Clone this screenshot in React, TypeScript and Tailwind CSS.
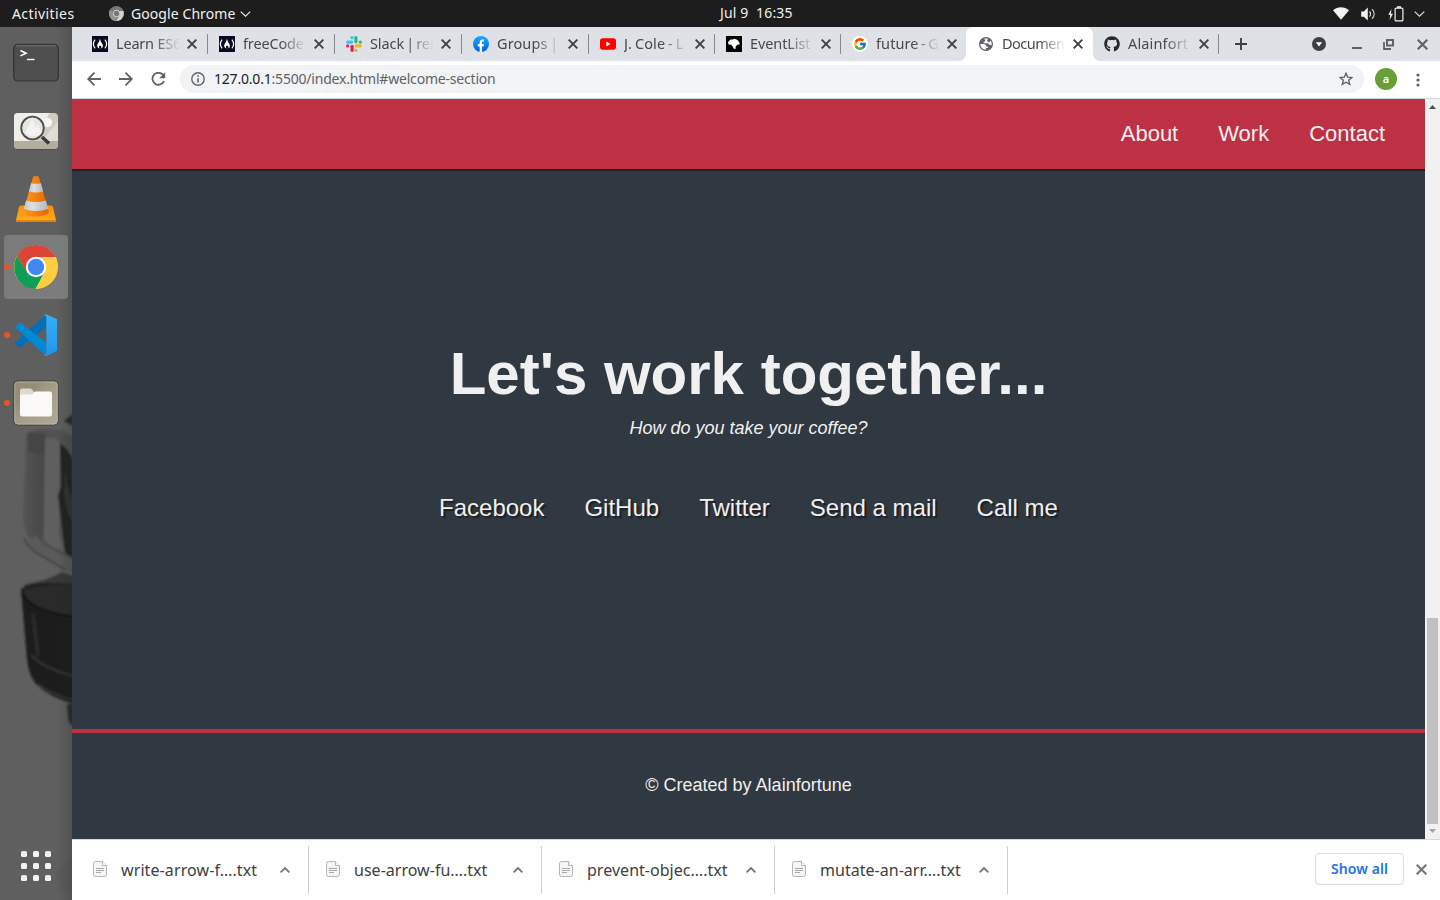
import React from "react";
import { FcGoogle } from "react-icons/fc";
import { FaGithub } from "react-icons/fa";

const uiFont = "font-['Noto_Sans','Open_Sans',sans-serif]";

function FccIcon() {
  return (
    <svg width="16" height="16" viewBox="0 0 16 16">
      <rect width="16" height="16" fill="#0a0a23" />
      <path d="M3.100 3.600C.9 6.400.9 9.600 3.100 12.400M12.900 3.600c2.200 2.800 2.200 6 0 8.800" fill="none" stroke="#fff" strokeWidth="1.200" />
      <path d="M7.500 3c1.300 1 1 2.200 1.700 3.300 1.400 1.700 2 3.200 1.500 4.700-.3.900-.9 1.400-1.600 1.600.6-1.200.3-2.100-.4-3.100-.3.700-.9.600-1.100.100-.9.900-.9 2 .2 3C5.100 12 4.600 9.700 5.900 7.600 6.800 6.100 7.800 4.900 7.500 3z" fill="#fff" />
    </svg>
  );
}

function SlackIcon() {
  return (
    <svg width="16" height="16" viewBox="0 0 16 16" strokeWidth="3.2" strokeLinecap="round">
      <path d="M1.700 6.100h4" stroke="#36c5f0" />
      <path d="M9.900 1.700v4" stroke="#2eb67d" />
      <path d="M10.300 9.900h4" stroke="#ecb22e" />
      <path d="M6.100 10.300v4" stroke="#e01e5a" />
      <path d="M6 1.700h.1" stroke="#36c5f0" />
      <path d="M14.300 6v.1" stroke="#2eb67d" />
      <path d="M9.900 14.300h.1" stroke="#ecb22e" />
      <path d="M1.700 9.900v.1" stroke="#e01e5a" />
    </svg>
  );
}

function FacebookIcon() {
  return (
    <svg width="16" height="16" viewBox="0 0 16 16">
      <defs>
        <linearGradient id="fb" x1="0" y1="0" x2="0" y2="1">
          <stop offset="0" stopColor="#19aaff" />
          <stop offset="1" stopColor="#0062e0" />
        </linearGradient>
      </defs>
      <circle cx="8" cy="8" r="8" fill="url(#fb)" />
      <path d="M6.700 16v-5.600H4.800V8h1.900V6.400c0-2 1.200-3 2.900-3 .7 0 1.400.1 1.400.1v1.900h-.9c-.9 0-1.200.5-1.200 1.200V8h2.100l-.4 2.400H8.900V16z" fill="#fff" />
    </svg>
  );
}

function YoutubeIcon() {
  return (
    <svg width="16" height="16" viewBox="0 0 16 16">
      <rect y="2.200" width="16" height="11.500" rx="2.800" fill="#f00" />
      <path d="M6.300 5.500v5l4.300-2.500z" fill="#fff" />
    </svg>
  );
}

function MdnIcon() {
  return (
    <svg width="16" height="16" viewBox="0 0 16 16">
      <rect width="16" height="16" fill="#000" />
      <path d="M2 6.300l1.200-1.600 1.300-1.300 2.300.1 1.300-.7 2 .4 1.900 1.400 1.300 1.800.7 1.900-2.500.4-1.700 1.600-.4 2.900-1.600-.8-1.500-2.300-1.200-1.300-2.500-.3z" fill="#fff" />
    </svg>
  );
}

function GoogleIcon() {
  return (
    <span className="flex size-4 items-center justify-center rounded-full bg-white">
      <FcGoogle size={14} />
    </span>
  );
}

function GlobeIcon() {
  return (
    <svg width="16" height="16" viewBox="0 0 16 16">
      <circle cx="8" cy="8" r="7" fill="#5f6368" />
      <path d="M2.300 8h3.200c1.900 0 2.800.9 2.800 2.600h1.500v1.500H7.900v1.500C4.800 13.500 2.300 11.200 2.300 8z" fill="#fff" />
      <path d="M5.700 2.900C7 2.300 8.600 2.200 9.900 2.700c-.1.900-.6 1.500-1.500 1.600H7v1.500H5.600v1.400h3.600c1.300 0 1.600.7 1.600 1.500h1.500c.5 0 1 .4 1.200.9 .5-2 .1-3.800-1-5.100-.2 1.200-.9 1.800-2.200 1.700C9.600 6.100 9.500 5.500 9.500 4.500L8 4z" fill="#fff" />
    </svg>
  );
}

function GithubIcon() {
  return <FaGithub size={16} color="#24292e" />;
}

function Cross({ size = 9, color = "#3c4043", stroke = 1.8 }: { size?: number; color?: string; stroke?: number }) {
  return (
    <svg width={size} height={size} viewBox="0 0 9 9" stroke={color} strokeWidth={stroke}>
      <path d="M.6.6l7.800 7.800M8.400.6L.6 8.400" />
    </svg>
  );
}

type TabInfo = { title: string; icon: () => React.JSX.Element; width: string; track: string; active?: boolean; sep?: boolean };

const tabs: TabInfo[] = [
  { title: "Learn ES6", icon: FccIcon, width: "w-[127px]", track: "tracking-[-0.2px]", sep: true },
  { title: "freeCode", icon: FccIcon, width: "w-[127px]", track: "tracking-[-0.15px]", sep: true },
  { title: "Slack | rem", icon: SlackIcon, width: "w-[127px]", track: "tracking-[-0.1px] [word-spacing:-1.5px]", sep: true },
  { title: "Groups | F", icon: FacebookIcon, width: "w-[127px]", track: "tracking-[0.1px] [word-spacing:-1px]", sep: true },
  { title: "J. Cole - L", icon: YoutubeIcon, width: "w-[126px]", track: "tracking-[0.1px] [word-spacing:-1px]", sep: true },
  { title: "EventList", icon: MdnIcon, width: "w-[126px]", track: "tracking-[-0.1px]", sep: true },
  { title: "future - G", icon: GoogleIcon, width: "w-[126px]", track: "tracking-[0.1px] [word-spacing:-1.5px]" },
  { title: "Documen", icon: GlobeIcon, width: "w-[126px]", track: "tracking-[-0.5px]", active: true },
  { title: "Alainfort", icon: GithubIcon, width: "w-[126px]", track: "tracking-[0.15px]", sep: true },
];

function Tab({ tab }: { tab: TabInfo }) {
  const Icon = tab.icon;
  return (
    <div className={`relative flex h-[34px] shrink-0 items-center pl-[11px] ${tab.width}`}>
      {tab.active && (
        <svg className="absolute -left-[9px] top-0" width="143" height="34" viewBox="0 0 143 34">
          <path d="M0 34c5 0 8-3 8-8V8c0-5 3-8 8-8h111c5 0 8 3 8 8v18c0 5 3 8 8 8z" fill="#fff" />
        </svg>
      )}
      <span className="relative flex size-4 shrink-0">
        <Icon />
      </span>
      <span
        className={`relative -mt-0.5 ml-2 w-[64px] shrink-0 overflow-hidden whitespace-nowrap text-[14.5px] leading-5 text-[#45494d] [mask-image:linear-gradient(to_right,#000_58%,transparent_100%)] ${tab.track}`}
      >
        {tab.title}
      </span>
      <span className="relative ml-[7px] flex">
        <Cross size={10} stroke={1.7} />
      </span>
      {tab.sep && <span className="ml-auto h-5 w-px bg-[#85898d]" />}
    </div>
  );
}

function TopBar() {
  return (
    <header className="flex h-[27px] shrink-0 items-center bg-[#1d1d1d] text-[14px] leading-5 text-[#f0f0f0]">
      <div className="flex w-[720px] items-center pl-3">
        <span className="w-[98px] tracking-[0.42px]">Activities</span>
        <svg width="15" height="15" viewBox="0 0 15 15" className="-ml-px">
          <circle cx="7.500" cy="7.500" r="7.500" fill="#777" />
          <path d="M14.400 5H7.500l3 4.200L7 15c5 .3 9-4.500 7.400-10z" fill="#d2d2d2" />
          <path d="M1.200 3.300l3.300 5.500L7.500 11 7 15C1.500 15-1.800 8.500 1.200 3.300z" fill="#929292" />
          <circle cx="7.500" cy="7.500" r="3.300" fill="#777" stroke="#ddd" strokeWidth=".9" />
        </svg>
        <span className="ml-[7px] w-[109px] tracking-[0.08px]">Google Chrome</span>
        <svg width="11" height="6" viewBox="0 0 11 6" fill="none" stroke="#e8e8e8" strokeWidth="1.200">
          <path d="M.7.600l4.800 4.600L10.300.600" />
        </svg>
      </div>
      <span className="-mt-px whitespace-pre tracking-[0.15px]">Jul 9  16:35</span>
      <div className="ml-auto flex items-center pr-[15px]">
        <svg width="16" height="13" viewBox="0 0 16 13">
          <path d="M0 3.200C4.500-.8 11.500-.8 16 3.200L8 12.800z" fill="#f2f2f2" />
        </svg>
        <svg width="15" height="14" viewBox="0 0 15 14" className="ml-3" fill="none">
          <path d="M.2 4.400h2.600L6.800.600v12.800L2.800 9.800H.2z" fill="#f2f2f2" />
          <path d="M8.500 4.500c1.200 1.300 1.200 3.700 0 5" stroke="#f2f2f2" strokeWidth="1.200" />
          <path d="M11 2.300c2.900 2.700 2.900 6.700 0 9.400" stroke="#c8c8c8" strokeWidth="1.200" />
        </svg>
        <svg width="16" height="16" viewBox="0 0 16 16" className="ml-[12px]" fill="none">
          <path d="M3.500 3L.3 8.800h2L1.600 14l3.400-6.200H2.900z" fill="#f2f2f2" />
          <rect x="7.100" y="2.100" width="7.800" height="12.800" rx="1" stroke="#f2f2f2" strokeWidth="1.200" />
          <path d="M9 1h4" stroke="#f2f2f2" strokeWidth="1.600" />
        </svg>
        <svg width="11" height="6" viewBox="0 0 11 6" fill="none" stroke="#ddd" strokeWidth="1.200" className="ml-[10px]">
          <path d="M.7.600l4.800 4.600L10.300.600" />
        </svg>
      </div>
    </header>
  );
}

function Wallpaper() {
  return (
    <svg className="absolute left-0 top-0" width="72" height="873" viewBox="0 27 72 873">
      <defs>
        <filter id="soft" x="-20%" y="-10%" width="140%" height="120%">
          <feGaussianBlur stdDeviation="1.300" />
        </filter>
        <linearGradient id="frame" x1="0" y1="0" x2="1" y2="0">
          <stop offset="0" stopColor="#535353" />
          <stop offset="1" stopColor="#474747" />
        </linearGradient>
        <linearGradient id="edge" x1="0" y1="0" x2="1" y2="0">
          <stop offset="0" stopColor="#222" stopOpacity="0" />
          <stop offset="1" stopColor="#222" stopOpacity=".22" />
        </linearGradient>
      </defs>
      <rect y="27" width="72" height="873" fill="#5f5f5f" />
      <g filter="url(#soft)">
        <path d="M64 421l9-7v12z" fill="#2a2a2a" />
        <path d="M30 431q25-6 43 5v120l-30-14q-20-10-20-22l3-80q0-7 4-9z" fill="#515151" />
        <path d="M26 434h19l-2 106-5 6q-12-6-14-22z" fill="url(#frame)" />
        <path d="M28 433h17v20q-9 4-17-3z" fill="#454545" />
        <path d="M45 439q10-4 15 4l-1 92 8 22-23-17z" fill="#5f5f5f" />
        <path d="M60 443q8 6 13 16v100l-8-6-7-58 3-8z" fill="#202020" />
        <path d="M65 465q2 25 8 35v24q-8-15-9-30z" fill="#333" />
        <path d="M26 540q2 8 16 15l30 18v-16l-29-17-5-5z" fill="#5a5a5a" />
        <path d="M24 538q3 10 18 18l24 14" fill="none" stroke="#404040" strokeWidth="1.500" />
        <path d="M38 536q5 8 14 12l20 10" fill="none" stroke="#474747" strokeWidth="1.500" />
        <path d="M24 585q25-5 38-13l11 4v20H24z" fill="#393939" />
        <path d="M21 589q8-6 28-6l25 1v120q-25-7-38-20-7-8-9-25z" fill="#1b1b1b" />
        <path d="M23 590q15-6 50-5v30q-24-2-38-10-11-6-12-15z" fill="#2c2c2c" />
        <path d="M23 593q5 17 50 24" fill="none" stroke="#121212" strokeWidth="2.500" />
        <path d="M31 655q12 13 42 21M38 684q12 10 35 16" fill="none" stroke="#343434" strokeWidth="2" />
        <path d="M33 614l5 42" stroke="#292929" strokeWidth="4" />
        <path d="M67 704h7v22q-5-2-6-7z" fill="#2a2a2a" />
        <path d="M74 858l-18 12 4 20h14z" fill="#565656" opacity=".5" />
      </g>
      <rect x="58" y="27" width="14" height="873" fill="url(#edge)" />
    </svg>
  );
}

function TerminalIcon() {
  return (
    <svg width="48" height="48" viewBox="0 0 48 48">
      <rect x="1.700" y="5.400" width="44.600" height="36.600" rx="4" fill="#4e4e4e" stroke="#343434" strokeWidth="1.200" />
      <path d="M4 6.800h40" stroke="#737373" />
      <path d="M8.500 11.500l5.500 2.700-5.500 2.700" fill="none" stroke="#fff" strokeWidth="1.600" />
      <path d="M15 20.500h7.500" stroke="#fff" strokeWidth="1.400" />
    </svg>
  );
}

function ViewerIcon() {
  return (
    <svg width="48" height="48" viewBox="0 0 48 48">
      <rect x="2" y="6.800" width="44" height="36" rx="4" fill="#4a4a48" />
      <rect x="2" y="6" width="44" height="36" rx="4" fill="#cfcdc2" />
      <path d="M6 6h32L17 34H2V10q0-4 4-4z" fill="#efefe8" />
      <path d="M46 14v20H30z" fill="#dedcd3" />
      <path d="M2 34h44v4q0 4-4 4H6q-4 0-4-4z" fill="#b4ae9e" />
      <circle cx="35.500" cy="15.500" r="4.700" fill="#f6f6f1" />
      <circle cx="20.500" cy="21" r="11.300" fill="#e4e5e1" fillOpacity=".9" stroke="#4c4c4c" strokeWidth="1.800" />
      <path d="M13 26l7-14 4 8 2-3 4 9q-7 7-17 0z" fill="#fff" fillOpacity=".5" />
      <path d="M30 30l7 6.500" stroke="#3b3b3b" strokeWidth="3.600" />
    </svg>
  );
}

function VlcIcon() {
  return (
    <svg width="48" height="48" viewBox="0 0 48 48">
      <defs>
        <linearGradient id="cone" x1="0" y1="0" x2="1" y2="0">
          <stop offset="0" stopColor="#ff9420" />
          <stop offset=".45" stopColor="#f58410" />
          <stop offset="1" stopColor="#de6400" />
        </linearGradient>
        <linearGradient id="band" x1="0" y1="0" x2="1" y2="0">
          <stop offset="0" stopColor="#bfc4c8" />
          <stop offset=".35" stopColor="#dde0e3" />
          <stop offset="1" stopColor="#b2b8bc" />
        </linearGradient>
        <linearGradient id="base" x1="0" y1="0" x2="0" y2="1">
          <stop offset="0" stopColor="#ff8f00" />
          <stop offset="1" stopColor="#ffad22" />
        </linearGradient>
      </defs>
      <path d="M9 30.500h30q1.500 0 2 1.500L44 45.500q.2 1.200-1 1.200H5q-1.200 0-1-1.200L7 32q.5-1.500 2-1.500z" fill="url(#base)" />
      <path d="M4 45.300h40v1.400H4z" fill="#e67a00" />
      <path d="M21.200 1.800q2.800-1.500 5.600 0L37 37.500q-4 4-13 4t-13-4z" fill="url(#cone)" />
      <path d="M19.100 8.200q4.900 1.200 9.800 0l2.300 8.200q-7.200 2.200-14.400 0z" fill="url(#band)" />
      <path d="M14.100 25.400q9.900 3 19.800 0l2.400 8.700q-12.300 4-24.600 0z" fill="url(#band)" />
    </svg>
  );
}

function ChromeIcon() {
  return (
    <svg width="48" height="48" viewBox="0 0 48 48">
      <circle cx="24" cy="24" r="22" fill="#ffcd40" />
      <path d="M24 24L14.500 29.500 5 13Q10.800 2 24 2c9 0 16 5 19.800 12H24z" fill="#db4437" />
      <path d="M5 13l9.800 16.500L24 34l8.500-5L23.500 46C8 46-3 29 5 13z" fill="#0f9d58" />
      <path d="M24 14h19.800c5 11-1 31-20.300 32L33 29z" fill="#ffcd40" />
      <circle cx="24" cy="24" r="10.200" fill="#fff" />
      <circle cx="24" cy="24" r="8.200" fill="#4285f4" />
    </svg>
  );
}

function CodeIcon() {
  return (
    <svg width="48" height="48" viewBox="0 0 48 48">
      <defs>
        <linearGradient id="panel" x1="0" y1="0" x2="0" y2="1">
          <stop offset="0" stopColor="#32b0f7" />
          <stop offset="1" stopColor="#2295ea" />
        </linearGradient>
      </defs>
      <path d="M3.500 31.300L34 3.300v13L9.500 35.500q-1.500 1-3 0L3.500 33q-1-1 0-1.700z" fill="#0070b8" />
      <path d="M3.500 16.700L34 44.700v-13L9.500 12.500q-1.500-1-3 0L3.500 15q-1 1 0 1.700z" fill="#0089d5" />
      <path d="M34 3.300l11 5v31.500l-11 5.400q-1 0-2-1l2.300-2V5.600L32 4z" fill="url(#panel)" />
    </svg>
  );
}

function FilesIcon() {
  return (
    <svg width="48" height="48" viewBox="0 0 48 48">
      <defs>
        <linearGradient id="files" x1="0" y1="0" x2="1" y2="1">
          <stop offset=".3" stopColor="#958d79" />
          <stop offset=".45" stopColor="#a29b88" />
          <stop offset="1" stopColor="#b0aa99" />
        </linearGradient>
      </defs>
      <rect x="1.800" y="2" width="44.400" height="44" rx="4" fill="url(#files)" stroke="#3f3e39" />
      <rect x="2.800" y="3" width="42.400" height="42" rx="3" fill="none" stroke="#bdb7a6" strokeWidth=".8" />
      <path d="M8 14v-2.500q0-2 2-2h8q1.500 0 2.500 1.500l1.500 2.500H38v6H8z" fill="#dedace" />
      <path d="M8 17.500q0-2 2-2h9q2 0 4-3h15q2 0 2 2v20.500q0 2.500-2.500 2.500h-27Q8 37.500 8 35z" fill="#faf9f8" />
    </svg>
  );
}

const dockItems = [
  { icon: TerminalIcon, running: false, active: false },
  { icon: ViewerIcon, running: false, active: false },
  { icon: VlcIcon, running: false, active: false },
  { icon: ChromeIcon, running: true, active: true },
  { icon: CodeIcon, running: true, active: false },
  { icon: FilesIcon, running: true, active: false },
];

function Dock() {
  return (
    <aside className="relative flex w-[72px] shrink-0 flex-col overflow-hidden">
      <Wallpaper />
      <div className="relative flex flex-col gap-1 px-1 pt-1">
        {dockItems.map(({ icon: Icon, running, active }, i) => (
          <div key={i} className={`relative flex size-16 items-center justify-center rounded-[4px] ${active ? "bg-[#7b7b7b]" : ""}`}>
            {running && <span className="absolute left-0 top-[29px] size-[6px] rounded-full bg-[#e95420]" />}
            <Icon />
          </div>
        ))}
      </div>
      <div className="relative mt-auto grid grid-cols-3 gap-[6px] self-center pb-[19px]">
        {Array.from({ length: 9 }, (_, i) => (
          <span key={i} className="size-[6px] rounded-[1.5px] bg-[#f2f2f2]" />
        ))}
      </div>
    </aside>
  );
}

function TabStrip() {
  return (
    <div className="flex h-[34px] shrink-0 items-center bg-[#dee1e6] pl-[9px]">
      {tabs.map((t, i) => (
        <Tab key={i} tab={t} />
      ))}
      <svg width="12" height="12" viewBox="0 0 12 12" className="ml-4" stroke="#3c4043" strokeWidth="1.900">
        <path d="M6 0v12M0 6h12" />
      </svg>
      <div className="ml-auto flex items-center pr-[13px]">
        <svg width="14" height="14" viewBox="0 0 14 14">
          <circle cx="7" cy="7" r="7" fill="#3c4043" />
          <path d="M3.800 5.200h6.400L7 9.500z" fill="#fff" />
        </svg>
        <svg width="10" height="10" viewBox="0 0 10 10" className="ml-[26px]">
          <path d="M0 9h10" stroke="#5f6368" strokeWidth="2" />
        </svg>
        <svg width="11" height="11" viewBox="0 0 11 11" className="ml-[21px]" fill="none" stroke="#5f6368">
          <rect x="4" y="1" width="6" height="5.500" strokeWidth="2" />
          <path d="M1 3v7h7" strokeWidth="1.800" />
        </svg>
        <span className="-mr-px ml-[23px] flex">
          <Cross size={11} color="#5f6368" />
        </span>
      </div>
    </div>
  );
}

function Toolbar() {
  return (
    <div className="flex h-[38px] shrink-0 items-center border-b border-[#d5d8dc] bg-white pb-px">
      <div className="flex items-center pl-[15px]">
        <svg width="14" height="14" viewBox="0 0 14 14" fill="none" stroke="#5f6368" strokeWidth="1.800">
          <path d="M14 7H1.500M7.500.700L1.200 7l6.300 6.300" />
        </svg>
        <svg width="14" height="14" viewBox="0 0 14 14" fill="none" stroke="#5f6368" strokeWidth="1.800" className="ml-[18px]">
          <path d="M0 7h12.500M6.500.700L12.800 7l-6.300 6.300" />
        </svg>
        <svg width="15" height="14" viewBox="0 0 15 14" fill="none" stroke="#5f6368" strokeWidth="1.800" className="ml-[18px]">
          <path d="M12.500 3.500A6 6 0 1 0 13 9" />
          <path d="M14.200.200v6H8.200z" fill="#5f6368" stroke="none" />
        </svg>
      </div>
      <div className="ml-[14px] flex h-7 w-[1184px] items-center rounded-full bg-[#f1f3f4] pl-[11px] pr-[11px]">
        <svg width="14" height="14" viewBox="0 0 14 14" fill="none" stroke="#5f6368" strokeWidth="1.400">
          <circle cx="7" cy="7" r="6.200" />
          <path d="M7 6.200v4.300M7 3.300v1.500" strokeWidth="1.600" />
        </svg>
        <span className="ml-[9px] whitespace-nowrap text-[14px] leading-5 tracking-[-0.2px] text-[#5f6368]">
          <span className="text-[#202124]">127.0.0.1</span>:5500/index.html#welcome-section
        </span>
        <svg width="14" height="14" viewBox="0 0 14 14" className="ml-auto" fill="none" stroke="#5f6368" strokeWidth="1.400">
          <path d="M7 1.300l1.700 3.900 4.200.3-3.200 2.800 1 4.100L7 10.200l-3.700 2.200 1-4.100L1.100 5.500l4.200-.3z" />
        </svg>
      </div>
      <span className="ml-[11px] flex size-[22px] items-center justify-center rounded-full bg-[#689f38] pb-0.5 text-[11px] font-semibold leading-none text-white">a</span>
      <svg width="4" height="14" viewBox="0 0 4 14" className="ml-[19px] mt-px" fill="#5f6368">
        <circle cx="2" cy="2" r="1.600" />
        <circle cx="2" cy="7" r="1.600" />
        <circle cx="2" cy="12" r="1.600" />
      </svg>
    </div>
  );
}

function WebPage() {
  return (
    <div className="flex h-[740px] shrink-0">
      <div className="flex w-[1353px] flex-col bg-[#303841] font-['Liberation_Sans',Arial,sans-serif] text-[#f0f0f0]">
        <nav className="flex h-[70px] shrink-0 items-center justify-end gap-10 bg-[#be3144] pr-10 text-[22px] leading-[26px] shadow-[0_2px_0_#1c2027]">
          <a>About</a>
          <a>Work</a>
          <a>Contact</a>
        </nav>
        <section className="flex h-[560px] flex-col items-center pt-[169px]">
          <h1 className="text-[60px] font-bold leading-[72px]">Let's work together...</h1>
          <p className="mt-[7px] text-[18px] italic leading-[22px]">How do you take your coffee?</p>
          <div className="mt-[54px] flex gap-10 text-[24px] leading-[30px] [text-shadow:2px_2px_1px_#1f1f1f]">
            <a>Facebook</a>
            <a>GitHub</a>
            <a>Twitter</a>
            <a>Send a mail</a>
            <a>Call me</a>
          </div>
        </section>
        <footer className="flex flex-1 justify-center border-t-4 border-[#be3144] pt-[41px] text-[18px] leading-[22px]">
          <p>© Created by Alainfortune</p>
        </footer>
      </div>
      <div className="flex w-[15px] flex-col items-center bg-[#f1f1f1]">
        <svg width="7" height="4" viewBox="0 0 7 4" className="mt-[6px]">
          <path d="M0 4h7L3.500 0z" fill="#505050" />
        </svg>
        <span className="mt-auto h-[206px] w-[11px] bg-[#c1c1c1]" />
        <svg width="7" height="4" viewBox="0 0 7 4" className="mb-[6px] mt-[5px]">
          <path d="M0 0h7L3.500 4z" fill="#a3a3a3" />
        </svg>
      </div>
    </div>
  );
}

const downloads = [
  { name: "write-arrow-f….txt", track: "tracking-[0.1px]" },
  { name: "use-arrow-fu….txt", track: "tracking-[0.02px]" },
  { name: "prevent-objec….txt", track: "tracking-[0.03px]" },
  { name: "mutate-an-arr….txt", track: "tracking-[0.03px]" },
];

function DownloadShelf() {
  return (
    <div className="flex flex-1 items-center border-t border-[#d5d8dc] bg-white">
      {downloads.map((d, i) => (
        <div key={d.name} className={`flex h-12 items-center border-r border-[#cdcdcd] ${i === 0 ? "w-[237px] pl-[21px]" : "w-[233px] pl-[17px]"}`}>
          <svg width="14" height="16" viewBox="0 0 14 16" fill="#f5f5f5" stroke="#b5b5b5" className="-mt-0.5">
            <path d="M2.500.5h7l4 4v9q0 2-2 2h-9q-2 0-2-2v-11q0-2 2-2z" />
            <path d="M9.500.5v4h4" fill="#fff" />
            <path d="M3 7.500h8M3 9.500h8M3 11.500h5" stroke="#a0a0a0" strokeWidth=".9" />
          </svg>
          <span className={`ml-[14px] w-[159px] whitespace-nowrap text-[16px] leading-5 text-[#3c4043] ${d.track}`}>{d.name}</span>
          <svg width="10" height="6" viewBox="0 0 10 6" fill="none" stroke="#757575" strokeWidth="1.800">
            <path d="M.6 5.400L5 1l4.400 4.400" />
          </svg>
        </div>
      ))}
      <button className="-mt-[3px] ml-auto h-8 w-[89px] rounded-[4px] border border-[#dadce0] text-[14px] font-semibold leading-5 tracking-[0.08px] text-[#1a73e8]">Show all</button>
      <span className="-mt-0.5 ml-[12px] mr-[13px] flex">
        <Cross size={11} color="#757575" />
      </span>
    </div>
  );
}

export default function App() {
  return (
    <div className={`flex h-[900px] w-[1440px] flex-col overflow-hidden ${uiFont}`}>
      <TopBar />
      <div className="flex min-h-0 flex-1">
        <Dock />
        <main className="flex w-[1368px] flex-col">
          <TabStrip />
          <Toolbar />
          <WebPage />
          <DownloadShelf />
        </main>
      </div>
    </div>
  );
}
